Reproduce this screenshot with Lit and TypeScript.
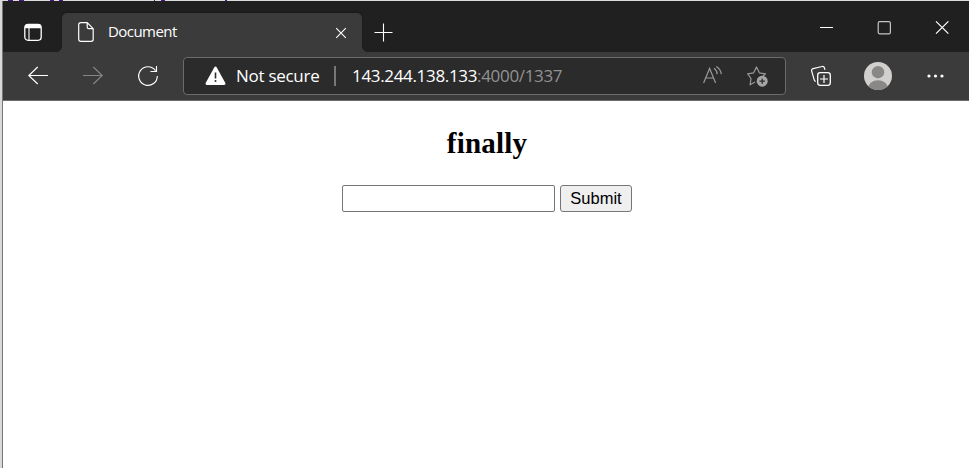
import { LitElement, html, css } from "lit";
import { customElement } from "lit/decorators.js";

@customElement("browser-tabs")
class BrowserTabs extends LitElement {
  static styles = css`
    :host { display: flex; height: 51px; background: #202020; font-family: "Open Sans", "Noto Sans", sans-serif; color: #fff; }
    svg { display: block; fill: none; stroke: #fff; overflow: visible; flex: none; }
    .menu { width: 59px; padding: 22px 0 0 21px; box-sizing: border-box; flex: none; }
    .tab { position: relative; width: 300px; height: 39.5px; margin-top: 11.5px; box-sizing: border-box; flex: none; display: flex; background: #3b3b3b; border-radius: 5px 5px 0 0; padding: 9.5px 15px 0 16px; box-shadow: 0 -1px 2px #1a1a1a; }
    .tab::before, .tab::after { content: ""; position: absolute; bottom: 0; width: 5px; height: 5px; }
    .tab::before { right: 100%; background: radial-gradient(circle at 0 0, #202020 4.5px, #3b3b3b 5px); }
    .tab::after { left: 100%; background: radial-gradient(circle at 100% 0, #202020 4.5px, #3b3b3b 5px); }
    .title { margin: -1px 0 0 14px; font-size: 15px; line-height: 20px; flex: 1; white-space: nowrap; letter-spacing: -0.55px; }
    .close { margin-top: 5px; }
    .plus { margin: 22px 0 0 12px; }
    .window { margin-left: auto; display: flex; gap: 43px; padding: 17px 20.5px 0 0; }
  `;
  render() {
    return html`
      <div class="menu">
        <svg width="18" height="18"><rect x=".8" y="1.3" width="16.4" height="16" rx="3.2" stroke-width="1.3"/><path d="M1 5.2V4a3 3 0 0 1 3-3h10a3 3 0 0 1 3 3v1.2z" fill="#fff" stroke="none"/><path d="M5 5v12" stroke-width="1.1"/></svg>
      </div>
      <div class="tab">
        <svg width="16" height="20"><path d="M.7 2.7a2 2 0 0 1 2-2h6.5l6 6v10.6a2 2 0 0 1-2 2H2.7a2 2 0 0 1-2-2zM9.2.7v4.5a1.5 1.5 0 0 0 1.5 1.5h4.5" stroke-width="1.2"/></svg>
        <span class="title">Document</span>
        <svg class="close" width="12" height="12"><path d="M1.2 1.2l9.6 9.6M10.8 1.2L1.2 10.8" stroke-width="1.1"/></svg>
      </div>
      <svg class="plus" width="18" height="18"><path d="M.5 9.5h18M9.5 .5v18" stroke-width="1.1"/></svg>
      <div class="window">
        <svg width="15" height="16"><path d="M1 9.5h13"/></svg>
        <svg width="15" height="16"><rect x="1.2" y="3.6" width="12.2" height="12.2" rx="1.6" stroke="#c4c4c4" stroke-width="1.2"/></svg>
        <svg width="14" height="16"><path d="M1 3.3l12.4 12.4M13.4 3.3L1 15.7" stroke-width="1.2"/></svg>
      </div>`;
  }
}

@customElement("browser-toolbar")
class BrowserToolbar extends LitElement {
  static styles = css`
    :host { display: flex; align-items: center; height: 49px; box-sizing: border-box; background: #3b3b3b; border-bottom: 1px solid #6c6c6c; padding: 0 25px 0 25px; font-family: "Open Sans", "Noto Sans", sans-serif; }
    svg { display: block; fill: none; stroke: #fff; overflow: visible; flex: none; }
    .nav { display: flex; gap: 35px; width: 155px; flex: none; }
    .forward { stroke: #858585; }
    .address { display: flex; align-items: center; width: 603px; height: 38px; box-sizing: border-box; border: 1px solid #6b6b6b; border-radius: 4px; background: #2b2b2b; padding: 0 17px 0 21px; flex: none; }
    .label, .url { font-size: 17px; line-height: 24px; white-space: nowrap; color: #fff; }
    .label { margin-left: 10px; width: 98px; letter-spacing: -0.28px; }
    .sep { width: 2px; height: 20px; background: #777; margin-right: 16px; }
    .url { flex: 1; letter-spacing: -0.33px; }
    .rest { color: #929292; }
    .star { margin-left: 24px; }
    .collections { margin-left: 25px; }
    .avatar { margin-left: 33px; }
    .more { margin-left: auto; }
  `;
  render() {
    return html`
      <div class="nav">
        <svg width="20" height="20"><path d="M20 9.5H.8M9.7 1L.8 9.5 9.7 18" stroke-width="1.15"/></svg>
        <svg class="forward" width="20" height="20"><path d="M0 9.5h19.2M10.3 1l8.9 8.5-8.9 8.5" stroke-width="1.15"/></svg>
        <svg width="20" height="20"><path d="M17.5 4.6A9.3 9.3 0 1 0 19.3 10M18.5 0v5.5h-6" stroke-width="1.15"/></svg>
      </div>
      <div class="address">
        <svg width="21" height="20"><path d="M10.5 1.8L1.8 17.6h17.4z" fill="#fff" stroke-width="2.6" stroke-linejoin="round"/><path d="M10.5 6.5v6" stroke="#2b2b2b" stroke-width="1.6"/><circle cx="10.5" cy="15" r="1" fill="#2b2b2b" stroke="none"/></svg>
        <span class="label">Not secure</span><span class="sep"></span>
        <span class="url">143.244.138.133<span class="rest">:4000/1337</span></span>
        <svg width="20" height="20"><g stroke="#999" stroke-width="1.2"><path d="M.6 17L6.6 2.4 12.6 17M2.7 12h7.8M11 2.3q3 2.1 3.2 5.8M13.3.4q4.4 2.7 5 7.7"/></g></svg>
        <svg class="star" width="21" height="20"><path d="M8 16l-4.9 2.8.9-6.3L.7 7.8l5.8-.9L9.5.9l3 6 6 .9-2.6 2.5" stroke="#999" stroke-width="1.2" stroke-linejoin="round"/><circle cx="15.2" cy="15.2" r="5.5" fill="#a5a5a5" stroke="none"/><path d="M12.5 15.2h5.4M15.2 12.5v5.4" stroke="#2b2b2b" stroke-width="1.2"/></svg>
      </div>
      <svg class="collections" width="20" height="20"><rect x="6.7" y="6.7" width="12.6" height="12.6" rx="2.5" stroke-width="1.3"/><path d="M9 13h8M13 9v8M4.7 15.4a2 2 0 0 1-1.5-1.5L.7 5.2a2 2 0 0 1 1.4-2.6L11 .5a2 2 0 0 1 2.4 1.3l.6 2" stroke-width="1.2"/></svg>
      <svg class="avatar" width="28" height="28" viewBox="0 0 28 28"><defs><clipPath id="disc"><circle cx="14" cy="14" r="14"/></clipPath></defs><g clip-path="url(#disc)" stroke="none"><path d="M0 0h28v28H0z" fill="#d2d0ce"/><circle cx="14" cy="10.2" r="6.2" fill="#8a8886"/><ellipse cx="14" cy="26" rx="9.8" ry="7.7" fill="#8a8886"/></g></svg>
      <svg class="more" width="17" height="4"><g fill="#fff" stroke="none"><circle cx="2" cy="2" r="1.6"/><circle cx="8.5" cy="2" r="1.6"/><circle cx="15" cy="2" r="1.6"/></g></svg>`;
  }
}

@customElement("app-root")
class AppRoot extends LitElement {
  static styles = css`
    :host { display: flex; flex-direction: column; height: 468px; overflow: hidden; background: #fff; }
    .backdrop { height: 1px; flex: none; background: linear-gradient(90deg, transparent 8px, #4b1a87 8px 13px, transparent 13px 19px, #4b1a87 19px 24px, transparent 24px 50px, #4b1a87 50px 54px, transparent 54px 59px, #4b1a87 59px 63px, transparent 63px 154px, #4b1a87 154px 155px, transparent 155px 161px, #4b1a87 161px 165px, transparent 165px 225px, #4b1a87 225px 227px, transparent 227px), #d9dcdb; }
    .window { flex: 1; border-left: 1px solid #777; margin-left: 2px; box-shadow: -2px 0 #d9d9d9; }
    .page { display: flex; flex-direction: column; align-items: center; padding: 25px 0 0 2px; }
    h2 { margin: 0; font: bold 29px/34px "Liberation Serif", serif; letter-spacing: 0.2px; font-variant-ligatures: none; color: #000; }
    form { display: flex; gap: 5px; margin-top: 25px; }
    input { width: 213px; height: 27px; box-sizing: border-box; border: 1px solid #767676; border-radius: 2px; padding: 1px 2px; background: #fff; }
    button { width: 72px; height: 27px; box-sizing: border-box; border: 1px solid #767676; border-radius: 3px; padding: 0; background: #efefef; color: #000; font: 16.5px "Liberation Sans", Arial, sans-serif; }
  `;
  render() {
    return html`
      <div class="backdrop"></div>
      <div class="window">
        <browser-tabs></browser-tabs>
        <browser-toolbar></browser-toolbar>
        <main class="page">
          <h2>finally</h2>
          <form @submit=${(e: Event) => e.preventDefault()}><input type="text" aria-label="Value"><button>Submit</button></form>
        </main>
      </div>`;
  }
}
